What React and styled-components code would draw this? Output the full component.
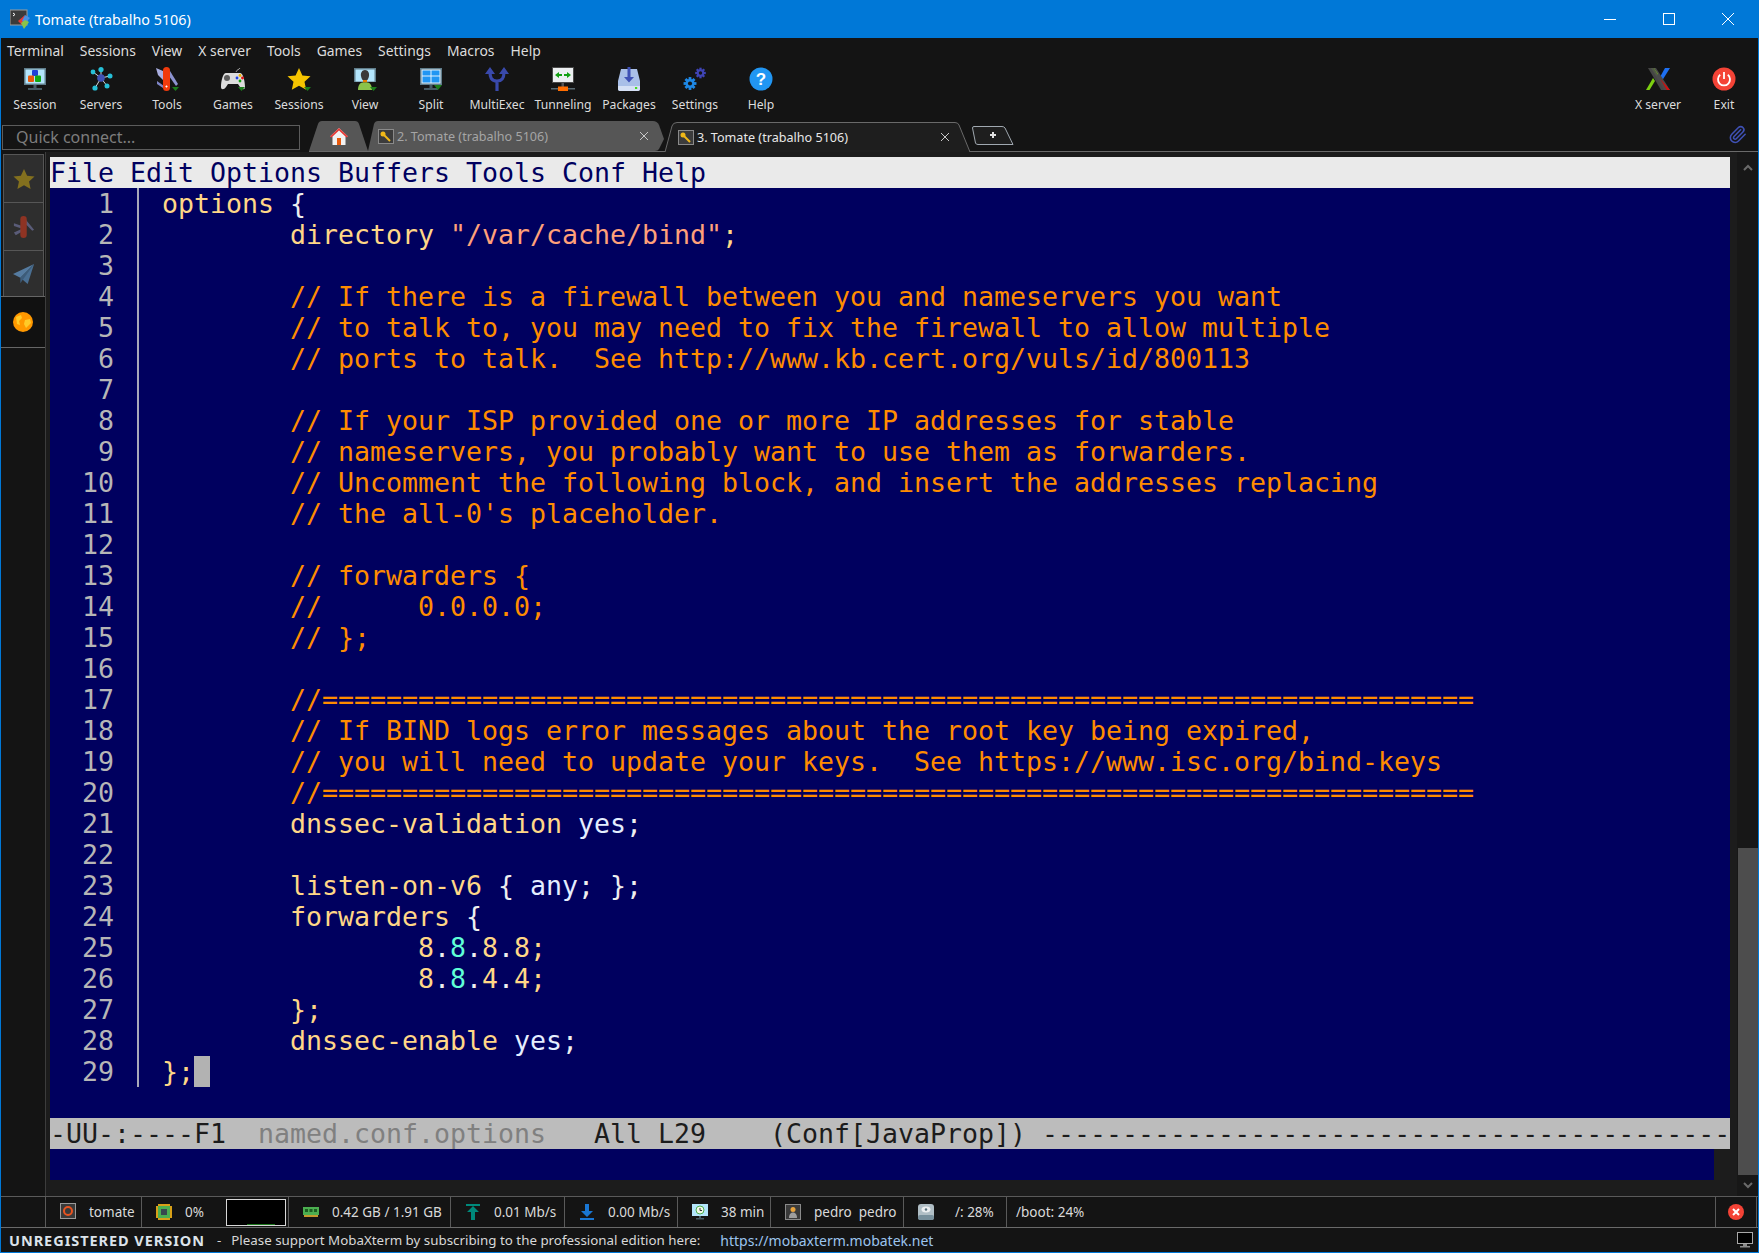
import styled, { createGlobalStyle } from "styled-components";
import { Paperclip } from "lucide-react";

const GlobalStyle = createGlobalStyle`
  html, body {
    margin: 0;
    padding: 0;
    background: #141414;
  }
  * {
    box-sizing: border-box;
  }
`;

const uiFont = `"Noto Sans", "Open Sans", sans-serif`;
const monoFont = `"DejaVu Sans Mono", monospace`;

const tokenColors = {
  p: "#ffd787", // names
  w: "#eeeeee", // punctuation
  s: "#ffa07a", // strings
  c: "#ff8c00", // comments
  t: "#5fffd7", // the second octet
  y: "#e4eeff", // yes
};

// the buffer, each line is a list of [kind, text]
const comment = (text) => [["p", "        "], ["c", text]];
const rule = "//" + "=".repeat(72);
const source = [
  [["p", "options"], ["w", " {"]],
  [["p", "        directory "], ["s", '"/var/cache/bind"'], ["p", ";"]],
  [],
  comment("// If there is a firewall between you and nameservers you want"),
  comment("// to talk to, you may need to fix the firewall to allow multiple"),
  comment("// ports to talk.  See http://www.kb.cert.org/vuls/id/800113"),
  [],
  comment("// If your ISP provided one or more IP addresses for stable"),
  comment("// nameservers, you probably want to use them as forwarders."),
  comment("// Uncomment the following block, and insert the addresses replacing"),
  comment("// the all-0's placeholder."),
  [],
  comment("// forwarders {"),
  comment("//      0.0.0.0;"),
  comment("// };"),
  [],
  comment(rule),
  comment("// If BIND logs error messages about the root key being expired,"),
  comment("// you will need to update your keys.  See https://www.isc.org/bind-keys"),
  comment(rule),
  [["p", "        dnssec-validation "], ["y", "yes"], ["w", ";"]],
  [],
  [["p", "        listen-on-v6 "], ["w", "{ "], ["y", "any"], ["w", "; };"]],
  [["p", "        forwarders "], ["w", "{"]],
  [["p", "                8"], ["w", "."], ["t", "8"], ["w", "."], ["p", "8"], ["w", "."], ["p", "8;"]],
  [["p", "                8"], ["w", "."], ["t", "8"], ["w", "."], ["p", "4"], ["w", "."], ["p", "4;"]],
  [["p", "        };"]],
  [["p", "        dnssec-enable "], ["y", "yes"], ["w", ";"]],
  [["p", "};"]],
];

const Window = styled.div`
  width: 1759px;
  height: 1253px;
  display: flex;
  flex-direction: column;
  background: #141414;
  border-left: 1px solid #0078d7;
  border-right: 1px solid #0078d7;
  border-bottom: 1px solid #0078d7;
  overflow: hidden;
  font-family: ${uiFont};
`;

const TitleBar = styled.div`
  height: 38px;
  flex: none;
  display: flex;
  align-items: center;
  background: #0078d7;
  color: #ffffff;
  padding-left: 9px;
  font-size: 14.3px;
`;

const TitleText = styled.span`
  margin-left: 4px;
`;

const WindowButtons = styled.div`
  margin-left: auto;
  display: flex;
  padding-right: 1px;
`;

const WindowButton = styled.div`
  width: 58px;
  height: 38px;
  display: flex;
  align-items: center;
  justify-content: center;
  margin-left: 1px;
`;

const MenuBar = styled.div`
  height: 26px;
  flex: none;
  display: flex;
  align-items: center;
  gap: 16px;
  padding: 0 0 2px 6px;
  color: #dcdcdc;
  font-size: 13.9px;
`;

const Toolbar = styled.div`
  height: 54px;
  flex: none;
  display: flex;
  padding-left: 1px;
  padding-right: 1px;
`;

const ToolButton = styled.div`
  width: 66px;
  display: flex;
  flex-direction: column;
  align-items: center;
  padding-top: 3px;
  color: #dcdcdc;
  font-size: 12.2px;
  line-height: 16px;
  white-space: nowrap;

  svg {
    width: 24px;
    height: 24px;
    margin-bottom: 6px;
  }
`;

const ToolSpacer = styled.div`
  flex: 1;
`;

const TabRow = styled.div`
  height: 34px;
  flex: none;
  display: flex;
  align-items: flex-end;
`;

const QuickConnect = styled.div`
  width: 298px;
  height: 25px;
  margin: 0 0 2px 1px;
  border: 1px solid #5c5c5c;
  padding-left: 13px;
  color: #7d7d7d;
  font-size: 16px;
  line-height: 22px;
`;

const TabStrip = styled.div`
  flex: 1;
  height: 34px;
  display: flex;
  align-items: flex-end;
  border-bottom: 1px solid #6a6a6a;
  margin-left: 9px;
  position: relative;
`;

const Tab = styled.div`
  position: relative;
  width: ${(p) => p.$w}px;
  height: 30px;
  margin-bottom: ${(p) => (p.$active ? "-1px" : "0")};
  flex: none;
  display: flex;
  align-items: center;
  padding-left: ${(p) => p.$pad}px;
  color: ${(p) => (p.$active ? "#e8e8e8" : "#a5a5a5")};
  font-size: 12.6px;
  white-space: nowrap;
`;

const TabShape = styled.svg`
  position: absolute;
  left: 0;
  top: 0;
  width: 100%;
  height: 100%;
`;

const TabContent = styled.div`
  position: relative;
  display: flex;
  align-items: center;
  width: 100%;
`;

const TabClose = styled.svg`
  position: absolute;
  right: ${(p) => p.$right}px;
  top: 50%;
  margin-top: -5px;
  width: 10px;
  height: 10px;
`;

const TabIcon = styled.svg`
  width: 16px;
  height: 15px;
  margin-right: 3px;
  flex: none;
`;

const NewTab = styled.svg`
  flex: none;
  width: 42px;
  height: 19px;
  margin: 0 0 6px 1px;
`;

const ClipButton = styled.div`
  position: absolute;
  right: 11px;
  top: 7px;
  color: #3f51b5;
  height: 20px;
`;

const Body = styled.div`
  flex: 1;
  min-height: 0;
  display: flex;
`;

const SideBar = styled.div`
  width: 44px;
  flex: none;
  display: flex;
  flex-direction: column;
  padding-top: 2px;
`;

const SideTab = styled.div`
  height: ${(p) => p.$h}px;
  margin-left: 2px;
  margin-right: 1px;
  display: flex;
  align-items: center;
  justify-content: center;
  background: #2e2e2e;
  border: 1px solid #565656;
  border-bottom: none;
`;

const SideActive = styled.div`
  height: 51px;
  flex: none;
  display: flex;
  align-items: center;
  justify-content: center;
  background: #111111;
  border-top: 1px solid #666666;
`;

const SideRest = styled.div`
  flex: 1;
  border-top: 1px solid #666666;
`;

const Workspace = styled.div`
  flex: 1;
  min-width: 0;
  display: flex;
  background: #1c1c1c;
  padding-left: 4px;
  border-left: 1px solid #3c3c3c;
`;

const TerminalColumn = styled.div`
  width: 1680px;
  flex: none;
  margin-top: 5px;
`;

const Terminal = styled.div`
  background: #00005f;
  font-family: ${monoFont};
  font-size: 26.58px;
  line-height: 31px;
  white-space: pre;
  color: #ffd787;
  font-kerning: none;
`;

const EmacsMenu = styled.div`
  height: 31px;
  background: #eaeaea;
  color: #00005f;
`;

const Buffer = styled.div`
  height: 930px;
`;

const Row = styled.div`
  height: 31px;
  display: flex;
`;

const LineNo = styled.span`
  width: 64px;
  flex: none;
  text-align: right;
  color: #b6b6b6;
`;

const Fringe = styled.span`
  width: 48px;
  flex: none;
  padding-left: 23px;

  &::before {
    content: "";
    display: block;
    width: 2px;
    height: 31px;
    background: #a8a8b8;
  }
`;

const Token = styled.span`
  color: ${(p) => tokenColors[p.$k]};
`;

const Cursor = styled.span`
  display: inline-block;
  width: 16px;
  height: 31px;
  background: #b2b2b2;
  vertical-align: top;
`;

const ModeLine = styled.div`
  height: 31px;
  background: #bcbcbc;
  color: #1c1c1c;
`;

const ModeName = styled.span`
  color: #808080;
`;

const MiniBuffer = styled.div`
  height: 31px;
  width: 1664px;
  background: #00005f;
`;

const ScrollBar = styled.div`
  width: 21px;
  margin-left: 7px;
  flex: none;
  background: #171717;
  display: flex;
  flex-direction: column;
  padding-top: 5px;
`;

const ScrollArrow = styled.div`
  height: 21px;
  flex: none;
  display: flex;
  align-items: center;
  justify-content: center;
  color: #6a6a6a;
`;

const ScrollTrack = styled.div`
  flex: 1;
  display: flex;
  flex-direction: column;
  justify-content: flex-end;
`;

const ScrollThumb = styled.div`
  height: 327px;
  margin-left: 1px;
  background: #4d4d4d;
`;

const StatusBar = styled.div`
  height: 31px;
  flex: none;
  display: flex;
  padding-left: 44px;
  background: #141414;
  border-top: 1px solid #5a5a5a;
`;

const StatusCell = styled.div`
  width: ${(p) => p.$w}px;
  flex: none;
  display: flex;
  align-items: center;
  padding-left: ${(p) => p.$pad ?? 14}px;
  border-left: 1px solid #5a5a5a;
  color: #dadada;
  font-size: 13.5px;
  white-space: pre;

  &:last-of-type {
    border-right: 1px solid #5a5a5a;
  }
`;

const StatusIcon = styled.svg`
  width: ${(p) => p.$size ?? 16}px;
  height: ${(p) => p.$size ?? 16}px;
  margin-right: ${(p) => p.$gap ?? 13}px;
  flex: none;
`;

const Graph = styled.div`
  width: 60px;
  height: 27px;
  margin-left: auto;
  margin-right: 2px;
  background: #000000;
  border: 1px solid #d8d8d8;
  position: relative;

  &::after {
    content: "";
    position: absolute;
    left: 20px;
    right: 10px;
    bottom: 0;
    height: 1px;
    background: #1f7a1f;
  }
`;

const AlertCell = styled.div`
  width: 42px;
  margin-left: auto;
  margin-right: 1px;
  display: flex;
  align-items: center;
  justify-content: center;
  border-left: 1px solid #5a5a5a;
  border-right: 1px solid #5a5a5a;
`;

const BottomBar = styled.div`
  height: 25px;
  flex: none;
  display: flex;
  align-items: center;
  padding-left: 8px;
  border-top: 1px solid #6a6a6a;
  color: #d8d8d8;
  font-size: 13.35px;
  white-space: nowrap;
`;

const Unregistered = styled.b`
  font-weight: 700;
  font-size: 14.5px;
  letter-spacing: 0.95px;
  color: #dce3ea;
  margin-right: 12px;
`;

const Dash = styled.span`
  margin-right: 10px;
`;

const Support = styled.span`
  margin-right: 20px;
`;

const SiteLink = styled.span`
  color: #9cc4ee;
  font-size: 14px;
`;

const BottomIcon = styled.svg`
  margin-left: auto;
  margin-right: 5px;
  width: 16px;
  height: 16px;
`;

/* icons */

const Marker = () => <path d="M17 20h7l-3.5 4z" fill="#1b7d1b" />;

const Monitor = ({ screen = "#b3e5fc", children }) => (
  <>
    <rect x="1" y="1" width="22" height="17" fill="#607d8b" />
    <rect x="2.5" y="2.5" width="19" height="14" fill={screen} />
    {children}
    <rect x="10.5" y="18" width="3" height="3" fill="#455a64" />
    <rect x="5" y="21" width="14" height="2" fill="#455a64" />
  </>
);

const SessionIcon = () => (
  <svg viewBox="0 0 24 24">
    <Monitor>
      <rect x="9" y="3" width="6" height="6" rx="1" fill="#1e40d8" />
      <rect x="5" y="8.5" width="6" height="6.5" rx="1" fill="#e8590c" />
      <rect x="12" y="8.5" width="6" height="6.5" rx="1" fill="#12a812" />
    </Monitor>
  </svg>
);

const ServersIcon = () => (
  <svg viewBox="0 0 24 24">
    <g stroke="#cfd8dc" strokeWidth="1">
      <path d="M4 5L12 11M12 2V11M21 9L12 11M18 19L12 11M6 21L12 11" />
    </g>
    <g fill="#26c0d8">
      <circle cx="4" cy="5" r="2.4" />
      <circle cx="12" cy="2.6" r="2.6" />
      <circle cx="21" cy="9" r="2.5" />
      <circle cx="18" cy="19" r="2.5" />
      <circle cx="6" cy="21" r="2.6" />
    </g>
    <circle cx="12" cy="11" r="3.8" fill="#3f51b5" />
  </svg>
);

const ToolsIcon = () => (
  <svg viewBox="0 0 24 24">
    <path d="M1 1L8 4L10 15L3 8z" fill="#a9aee0" />
    <path d="M2 14L9 19L8 21L2 17z" fill="#7f86c8" />
    <path d="M15 4L23 17L21 19L14 9z" fill="#8c92cf" />
    <rect x="8" y="0" width="7" height="24" rx="3.5" fill="#f03a0c" />
    <path d="M10.5 19.5h2M11.5 18.5v2" stroke="#ffffff" strokeWidth="1.2" />
    <Marker />
  </svg>
);

const GamesIcon = () => (
  <svg viewBox="0 0 24 24">
    <path d="M15 5C16 2 18 3 19 1" stroke="#9e9e9e" strokeWidth="1" fill="none" />
    <path d="M5 6H19C22 6 24 14 24 20C24 23 21 23 19 20L17 17H7L5 20C3 23 0 23 0 20C0 14 2 6 5 6z" fill="#dcdcdc" />
    <circle cx="6" cy="11" r="3" fill="#5d5d5d" />
    <circle cx="16" cy="11" r="1.4" fill="#1e40e8" />
    <circle cx="19" cy="8.5" r="1.4" fill="#f0b400" />
    <circle cx="21.5" cy="11" r="1.4" fill="#e01010" />
    <circle cx="19" cy="14" r="1.4" fill="#10a010" />
    <Marker />
  </svg>
);

const StarIcon = () => (
  <svg viewBox="0 0 24 24">
    <path d="M12 1L15.4 8.4L23.5 9.3L17.5 14.8L19.2 22.8L12 18.7L4.8 22.8L6.5 14.8L.5 9.3L8.6 8.4z" fill="#f5c400" />
    <Marker />
  </svg>
);

const ViewIcon = () => (
  <svg viewBox="0 0 24 24">
    <rect x="1" y="1" width="22" height="14" fill="#607d8b" />
    <rect x="2.5" y="2.5" width="19" height="12" fill="#b3e5fc" />
    <path d="M12 3C15 3 16.5 6 16 9C15.6 12 14 14 12 14C10 14 8.4 12 8 9C7.5 6 9 3 12 3z" fill="#3a3a3a" />
    <path d="M10 13H14V15.5H10z" fill="#e67e00" />
    <path d="M5 23C5 18 7 15.5 10 15.5H14C17 15.5 19 18 19 23z" fill="#8bc34a" />
    <Marker />
  </svg>
);

const SplitIcon = () => (
  <svg viewBox="0 0 24 24">
    <Monitor screen="#e3f2fd">
      <rect x="3.5" y="3.5" width="8" height="5" fill="#2196f3" />
      <rect x="12.5" y="3.5" width="8" height="5" fill="#2196f3" />
      <rect x="3.5" y="9.5" width="8" height="6" fill="#2196f3" />
      <rect x="12.5" y="9.5" width="8" height="6" fill="#2196f3" />
    </Monitor>
    <path d="M15 18h8l-4 5z" fill="#1b7d1b" />
  </svg>
);

const ExecIcon = () => (
  <svg viewBox="0 0 24 24">
    <path d="M12 24V14M12 14C6 14 5 10 5 5M12 14C18 14 19 10 19 5" stroke="#3949ab" strokeWidth="3.2" fill="none" />
    <path d="M5 0L10 7H0zM19 0L24 7H14z" fill="#3949ab" />
  </svg>
);

const TunnelIcon = () => (
  <svg viewBox="0 0 24 24">
    <rect x="1" y="0" width="22" height="16" fill="#4a4a4a" />
    <rect x="2" y="1" width="20" height="14" fill="#eceff1" />
    <path d="M4 8L8 5V11zM11 7H8V9H11zM20 8L16 5V11zM13 7H16V9H13z" fill="#12a012" />
    <rect x="10.5" y="16" width="2.5" height="4" fill="#555555" />
    <rect x="0" y="21" width="24" height="1.5" fill="#5a6a72" />
    <rect x="7" y="19.5" width="10" height="4.5" fill="#ff6d00" />
  </svg>
);

const PackagesIcon = () => (
  <svg viewBox="0 0 24 24">
    <path d="M4 2H20L23 14V22C23 23 22 24 21 24H3C2 24 1 23 1 22V14z" fill="#a9bfe8" />
    <path d="M1 19H23V22C23 23 22 24 21 24H3C2 24 1 23 1 22z" fill="#d5e0f5" />
    <path d="M10.5 0H13.5V10H17L12 15.5L7 10H10.5z" fill="#3f51b5" />
    <rect x="18" y="20" width="2.2" height="2" fill="#44dd22" />
  </svg>
);

// a gear is a disc with eight square teeth and a hole in the middle
const Gear = ({ x, y, r, color }) => (
  <g fill={color}>
    {[0, 45, 90, 135].map((a) => (
      <rect
        key={a}
        x={x - r * 0.3}
        y={y - r * 1.4}
        width={r * 0.6}
        height={r * 2.8}
        transform={`rotate(${a} ${x} ${y})`}
      />
    ))}
    <circle cx={x} cy={y} r={r} />
    <circle cx={x} cy={y} r={r * 0.45} fill="#141414" />
  </g>
);

const SettingsIcon = () => (
  <svg viewBox="0 0 24 24">
    <Gear x={17.5} y={6} r={3.8} color="#3f44b5" />
    <Gear x={7} y={16.5} r={4.6} color="#1e88e5" />
  </svg>
);

const HelpIcon = () => (
  <svg viewBox="0 0 24 24">
    <circle cx="12" cy="12" r="11.5" fill="#2196f3" />
    <text x="12" y="18" fontSize="17" fontWeight="700" fontFamily="Liberation Sans" textAnchor="middle" fill="#ffffff">?</text>
  </svg>
);

const XServerIcon = () => (
  <svg viewBox="0 0 24 24">
    <path d="M14 10L19 1H24L16.5 13z" fill="#1e6ff0" />
    <path d="M9 14L3.5 23H0L7 11z" fill="#7ccf10" />
    <path d="M5 1H10L24 23H22L18 23z" fill="#4a4a4a" />
    <path d="M5 1H8L12 7L10.5 9z" fill="#7ccf10" />
    <path d="M14.5 12L24 23H19L13.5 14z" fill="#d80b0b" />
    <path d="M2 1H8L21 23H15z" fill="#4a4a4a" opacity="0.9" />
  </svg>
);

const ExitIcon = () => (
  <svg viewBox="0 0 24 24">
    <circle cx="12" cy="12" r="11.5" fill="#f44336" />
    <path d="M8.2 7.8A6 6 0 1 0 15.8 7.8M12 5V12" stroke="#ffffff" strokeWidth="1.8" fill="none" />
  </svg>
);

const KeyIcon = () => (
  <TabIcon viewBox="0 0 16 15">
    <rect x=".5" y=".5" width="15" height="14" fill="#3c3c3c" stroke="#8a8a8a" />
    <path d="M5.5 5.5L12 12" stroke="#f0b818" strokeWidth="2" />
    <circle cx="5" cy="5" r="2.5" fill="#f0b818" />
  </TabIcon>
);

const HomeIcon = () => (
  <svg width="18" height="17" viewBox="0 0 18 17">
    <path d="M9 0L18 8.5H15.5V17H2.5V8.5H0z" fill="#f2f2f2" />
    <path d="M9 0L18 8.5L16.5 9.5L9 2.5L1.5 9.5L0 8.5z" fill="#e53935" />
    <rect x="7" y="10" width="4" height="7" fill="#e8590c" />
  </svg>
);

const CloseGlyph = ({ right }) => (
  <TabClose $right={right} viewBox="0 0 10 10">
    <path d="M1 1L9 9M9 1L1 9" stroke="#c8c8c8" strokeWidth="1" />
  </TabClose>
);

const AppIcon = () => (
  <svg width="21" height="21" viewBox="0 0 21 21">
    <rect x="0" y="1" width="17" height="15" fill="#3a3a3a" stroke="#9e9e9e" />
    <path d="M3 4L5 5.5L3 7" stroke="#ffffff" fill="none" />
    <path d="M15 6L8 12L12 16z" fill="#e53935" />
    <path d="M15 6L20 9L15 14L12 12z" fill="#4a90e2" />
    <path d="M11 14L15 11L19 13L14 20z" fill="#8bc34a" />
  </svg>
);

const toolButtons = [
  ["Session", SessionIcon],
  ["Servers", ServersIcon],
  ["Tools", ToolsIcon],
  ["Games", GamesIcon],
  ["Sessions", StarIcon],
  ["View", ViewIcon],
  ["Split", SplitIcon],
  ["MultiExec", ExecIcon],
  ["Tunneling", TunnelIcon],
  ["Packages", PackagesIcon],
  ["Settings", SettingsIcon],
  ["Help", HelpIcon],
];

const menuItems = ["Terminal", "Sessions", "View", "X server", "Tools", "Games", "Settings", "Macros", "Help"];

function App() {
  return (
    <Window>
      <GlobalStyle />
      <TitleBar>
        <AppIcon />
        <TitleText>Tomate (trabalho 5106)</TitleText>
        <WindowButtons>
          <WindowButton>
            <svg width="12" height="12" viewBox="0 0 12 12"><path d="M0 6.5H12" stroke="#fff" /></svg>
          </WindowButton>
          <WindowButton>
            <svg width="12" height="12" viewBox="0 0 12 12"><rect x=".5" y=".5" width="11" height="11" fill="none" stroke="#fff" /></svg>
          </WindowButton>
          <WindowButton>
            <svg width="12" height="12" viewBox="0 0 12 12"><path d="M0 0L12 12M12 0L0 12" stroke="#fff" /></svg>
          </WindowButton>
        </WindowButtons>
      </TitleBar>

      <MenuBar>
        {menuItems.map((item) => (
          <span key={item}>{item}</span>
        ))}
      </MenuBar>

      <Toolbar>
        {toolButtons.map(([label, Icon]) => (
          <ToolButton key={label}>
            <Icon />
            {label}
          </ToolButton>
        ))}
        <ToolSpacer />
        <ToolButton>
          <XServerIcon />
          X server
        </ToolButton>
        <ToolButton>
          <ExitIcon />
          Exit
        </ToolButton>
      </Toolbar>

      <TabRow>
        <QuickConnect>Quick connect...</QuickConnect>
        <TabStrip>
          <Tab $w={59} $pad={21}>
            <TabShape viewBox="0 0 59 30">
              <path d="M0 30L9 3Q10 0 13 0H46Q49 0 50 3L59 30z" fill="#565656" />
            </TabShape>
            <TabContent>
              <HomeIcon />
            </TabContent>
          </Tab>
          <Tab $w={296} $pad={10}>
            <TabShape viewBox="0 0 296 30">
              <path d="M0 30L6 3Q7 0 10 0H285Q289 0 291 4L296 18L291 28Q290 30 287 30z" fill="#565656" />
            </TabShape>
            <TabContent>
              <KeyIcon />
              2. Tomate (trabalho 5106)
              <CloseGlyph right={15} />
            </TabContent>
          </Tab>
          <Tab $w={307} $active $pad={14}>
            <TabShape viewBox="0 0 307 30">
              <path d="M0 30H1L8 4Q9 .5 13 .5H291Q294 .5 295 3L306 30H307" fill="#1e1e1e" stroke="#6a6a6a" />
            </TabShape>
            <TabContent>
              <KeyIcon />
              3. Tomate (trabalho 5106)
              <CloseGlyph right={21} />
            </TabContent>
          </Tab>
          <NewTab viewBox="0 0 42 19">
            <path d="M.5 2Q.5 .5 2 .5H30Q32 .5 33 2L41 18.5H6Q4 18.5 3.5 17z" fill="#1e1e1e" stroke="#a0a8b0" />
            <path d="M18 9H24M21 6V12" stroke="#e0e0e0" strokeWidth="2" />
          </NewTab>
          <ClipButton>
            <Paperclip size={19} strokeWidth={2} />
          </ClipButton>
        </TabStrip>
      </TabRow>

      <Body>
        <SideBar>
          <SideTab $h={48}>
            <svg width="22" height="22" viewBox="0 0 24 24">
              <path d="M12 1L15.4 8.4L23.5 9.3L17.5 14.8L19.2 22.8L12 18.7L4.8 22.8L6.5 14.8L.5 9.3L8.6 8.4z" fill="#83701e" />
            </svg>
          </SideTab>
          <SideTab $h={48}>
            <svg width="22" height="22" viewBox="0 0 24 24">
              <path d="M1 8L10 11L10 14L1 11zM1 18L10 14V17L3 21z" fill="#5a5c78" />
              <path d="M14 4L23 15L21 16L14 9z" fill="#5a5c78" />
              <rect x="8" y="0" width="7" height="24" rx="3.5" fill="#8e3323" />
            </svg>
          </SideTab>
          <SideTab $h={46}>
            <svg width="22" height="22" viewBox="0 0 24 24">
              <path d="M23 1L0 12L8 16z" fill="#557ba0" />
              <path d="M23 1L8 16L16 23z" fill="#4a6f92" />
              <path d="M23 1L8 16L8 22z" fill="#3d5c7a" />
            </svg>
          </SideTab>
          <SideActive>
            <svg width="20" height="20" viewBox="0 0 20 20">
              <circle cx="10" cy="10" r="10" fill="#ff9800" />
              <path d="M3 5L8 3L9 6L6 9L7 13L4 12zM12 8L17 7L18 11L13 16L11 12z" fill="#ffca28" />
            </svg>
          </SideActive>
          <SideRest />
        </SideBar>

        <Workspace>
          <TerminalColumn>
            <Terminal>
              <EmacsMenu>File Edit Options Buffers Tools Conf Help</EmacsMenu>
              <Buffer>
                {source.map((line, i) => (
                  <Row key={i}>
                    <LineNo>{i + 1}</LineNo>
                    <Fringe />
                    <span>
                      {line.map(([kind, text], j) => (
                        <Token key={j} $k={kind}>{text}</Token>
                      ))}
                      {i === source.length - 1 && <Cursor />}
                    </span>
                  </Row>
                ))}
              </Buffer>
              <ModeLine>
                -UU-:----F1  <ModeName>named.conf.options</ModeName>   All L29    (Conf[JavaProp]) {"-".repeat(43)}
              </ModeLine>
            </Terminal>
            <MiniBuffer />
          </TerminalColumn>
          <ScrollBar>
            <ScrollArrow>
              <svg width="10" height="7" viewBox="0 0 10 7"><path d="M1 6L5 2L9 6" stroke="currentColor" strokeWidth="2" fill="none" /></svg>
            </ScrollArrow>
            <ScrollTrack>
              <ScrollThumb />
            </ScrollTrack>
            <ScrollArrow>
              <svg width="10" height="7" viewBox="0 0 10 7"><path d="M1 1L5 5L9 1" stroke="currentColor" strokeWidth="2" fill="none" /></svg>
            </ScrollArrow>
          </ScrollBar>
        </Workspace>
      </Body>

      <StatusBar>
        <StatusCell $w={96}>
          <StatusIcon $size={18} $gap={11} viewBox="0 0 18 18">
            <rect x=".5" y=".5" width="15" height="15" fill="#3a3a3a" stroke="#9a9a9a" />
            <circle cx="8" cy="8" r="4" fill="none" stroke="#e95420" strokeWidth="2" />
          </StatusIcon>
          tomate
        </StatusCell>
        <StatusCell $w={147}>
          <StatusIcon viewBox="0 0 16 16">
            <rect x="0" y="2" width="16" height="12" fill="#d8a018" />
            <rect x="2" y="0" width="12" height="16" fill="#d8a018" />
            <rect x="2" y="2" width="12" height="12" fill="#4caf50" />
            <rect x="5" y="5" width="6" height="6" fill="#37474f" />
          </StatusIcon>
          0%
          <Graph />
        </StatusCell>
        <StatusCell $w={162}>
          <StatusIcon viewBox="0 0 16 16">
            <rect x="0" y="3" width="16" height="8" fill="#4caf50" />
            <rect x="2" y="5" width="3" height="3" fill="#1b5e20" />
            <rect x="6.5" y="5" width="3" height="3" fill="#1b5e20" />
            <rect x="11" y="5" width="3" height="3" fill="#1b5e20" />
            <rect x="1" y="11" width="14" height="2" fill="#c49a2c" />
          </StatusIcon>
          0.42 GB / 1.91 GB
        </StatusCell>
        <StatusCell $w={114}>
          <StatusIcon viewBox="0 0 16 16">
            <rect x="1" y="0" width="14" height="2" fill="#00897b" />
            <path d="M8 2L14 8H10V16H6V8H2z" fill="#00897b" />
          </StatusIcon>
          0.01 Mb/s
        </StatusCell>
        <StatusCell $w={113}>
          <StatusIcon viewBox="0 0 16 16">
            <path d="M6 0H10V7H14L8 13L2 7H6z" fill="#1976d2" />
            <rect x="1" y="14" width="14" height="2" fill="#1976d2" />
          </StatusIcon>
          0.00 Mb/s
        </StatusCell>
        <StatusCell $w={93}>
          <StatusIcon viewBox="0 0 16 16">
            <rect x="0" y="0" width="16" height="12" fill="#b3e5fc" />
            <circle cx="8" cy="6" r="4" fill="#f1f8e9" stroke="#4caf50" />
            <path d="M8 4V6.5H10" stroke="#333" fill="none" />
            <rect x="4" y="14" width="8" height="1.5" fill="#455a64" />
            <rect x="7" y="12" width="2" height="2" fill="#455a64" />
          </StatusIcon>
          38 min
        </StatusCell>
        <StatusCell $w={133}>
          <StatusIcon viewBox="0 0 16 16">
            <rect x=".5" y=".5" width="15" height="15" fill="#3a3a3a" stroke="#8a8a8a" />
            <circle cx="8" cy="5.5" r="2.5" fill="#e8a33d" />
            <path d="M4 14C4 10 6 8.5 8 8.5C10 8.5 12 10 12 14z" fill="#9e9e9e" />
          </StatusIcon>
          pedro  pedro
        </StatusCell>
        <StatusCell $w={103}>
          <StatusIcon $gap={21} viewBox="0 0 16 16">
            <rect x="0" y="0" width="16" height="16" rx="3" fill="#b0bec5" />
            <rect x="0" y="11" width="16" height="5" rx="2" fill="#78909c" />
            <ellipse cx="8" cy="5.5" rx="4.5" ry="3" fill="#eceff1" />
            <circle cx="8" cy="5.5" r="1.2" fill="#546e7a" />
          </StatusIcon>
          /: 28%
        </StatusCell>
        <StatusCell $w={98} $pad={9}>/boot: 24%</StatusCell>
        <AlertCell>
          <svg width="16" height="16" viewBox="0 0 16 16">
            <circle cx="8" cy="8" r="8" fill="#f44336" />
            <path d="M5 5L11 11M11 5L5 11" stroke="#ffffff" strokeWidth="2" />
          </svg>
        </AlertCell>
      </StatusBar>

      <BottomBar>
        <Unregistered>UNREGISTERED VERSION</Unregistered>
        <Dash>-</Dash>
        <Support>Please support MobaXterm by subscribing to the professional edition here:</Support>
        <SiteLink>https://mobaxterm.mobatek.net</SiteLink>
        <BottomIcon viewBox="0 0 16 16">
          <rect x=".5" y=".5" width="15" height="11" fill="#000" stroke="#a8a8a8" />
          <rect x="6" y="12" width="4" height="2" fill="#8a8a8a" />
          <rect x="3" y="14" width="10" height="1.5" fill="#8a8a8a" />
        </BottomIcon>
      </BottomBar>
    </Window>
  );
}

export default App;
